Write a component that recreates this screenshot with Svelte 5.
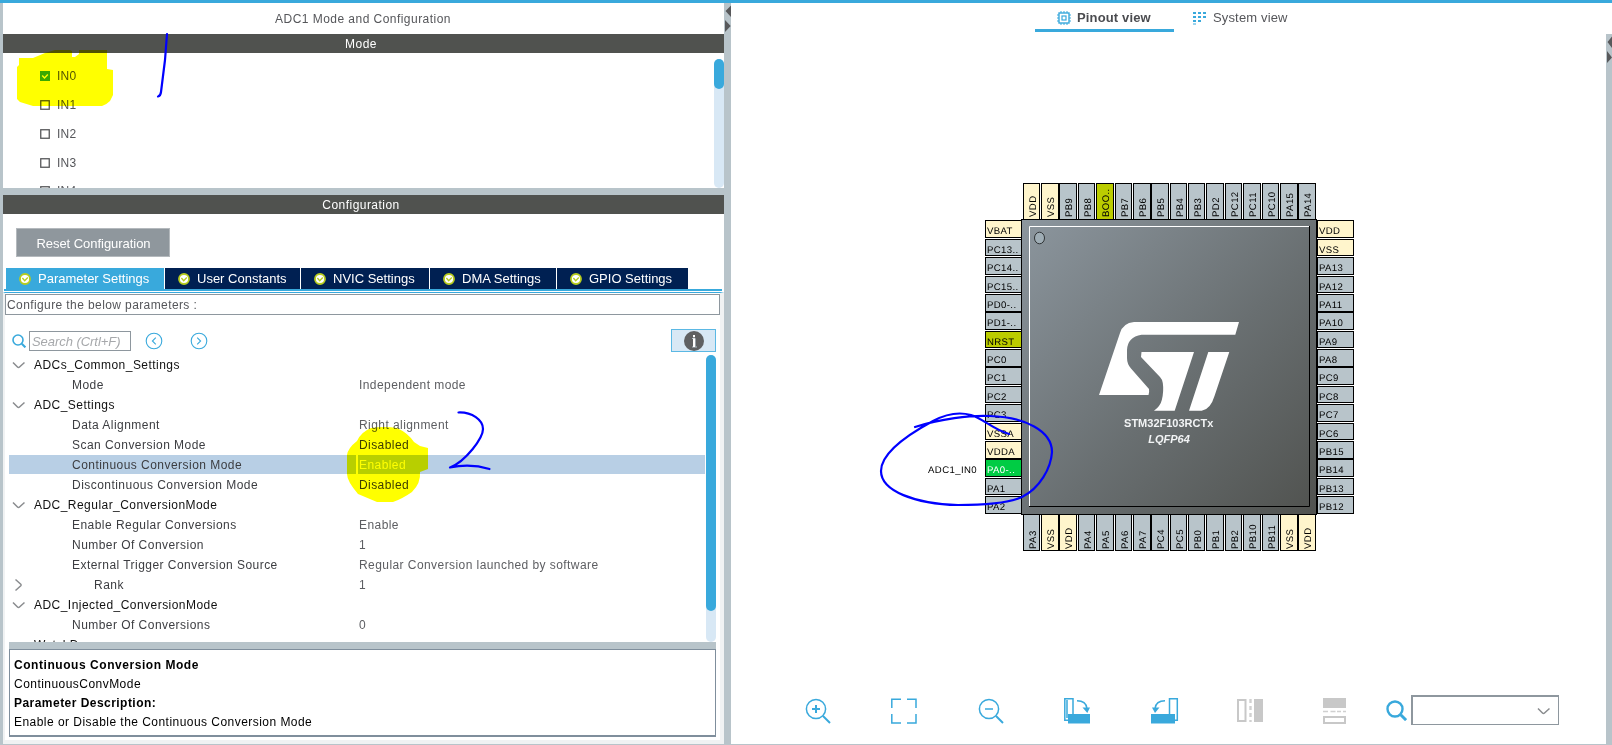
<script>
  const channels = ['IN0', 'IN1', 'IN2', 'IN3', 'IN4'];
  const tabs = [
    { label: 'Parameter Settings', width: 158, active: true },
    { label: 'User Constants', width: 135 },
    { label: 'NVIC Settings', width: 128 },
    { label: 'DMA Settings', width: 126 },
    { label: 'GPIO Settings', width: 131 }
  ];
  const rows = [
    { group: 'ADCs_Common_Settings' },
    { name: 'Mode', value: 'Independent mode' },
    { group: 'ADC_Settings' },
    { name: 'Data Alignment', value: 'Right alignment' },
    { name: 'Scan Conversion Mode', value: 'Disabled', dark: true },
    { name: 'Continuous Conversion Mode', value: 'Enabled', selected: true },
    { name: 'Discontinuous Conversion Mode', value: 'Disabled', dark: true },
    { group: 'ADC_Regular_ConversionMode' },
    { name: 'Enable Regular Conversions', value: 'Enable' },
    { name: 'Number Of Conversion', value: '1' },
    { name: 'External Trigger Conversion Source', value: 'Regular Conversion launched by software' },
    { name: 'Rank', value: '1', nested: true },
    { group: 'ADC_Injected_ConversionMode' },
    { name: 'Number Of Conversions', value: '0' },
    { group: 'WatchDog', bare: true }
  ];

  const topPins = ['VDD', 'VSS', 'PB9', 'PB8', 'BOO..', 'PB7', 'PB6', 'PB5', 'PB4', 'PB3', 'PD2', 'PC12', 'PC11', 'PC10', 'PA15', 'PA14'];
  const leftPins = ['VBAT', 'PC13..', 'PC14..', 'PC15..', 'PD0-..', 'PD1-..', 'NRST', 'PC0', 'PC1', 'PC2', 'PC3', 'VSSA', 'VDDA', 'PA0-..', 'PA1', 'PA2'];
  const rightPins = ['VDD', 'VSS', 'PA13', 'PA12', 'PA11', 'PA10', 'PA9', 'PA8', 'PC9', 'PC8', 'PC7', 'PC6', 'PB15', 'PB14', 'PB13', 'PB12'];
  const bottomPins = ['PA3', 'VSS', 'VDD', 'PA4', 'PA5', 'PA6', 'PA7', 'PC4', 'PC5', 'PB0', 'PB1', 'PB2', 'PB10', 'PB11', 'VSS', 'VDD'];
  const xs = [1023, 1041, 1059, 1078, 1096, 1115, 1133, 1151, 1170, 1188, 1206, 1225, 1243, 1262, 1280, 1298];
  const ws = [17, 18, 18, 17, 18, 17, 18, 18, 17, 17, 18, 17, 18, 17, 18, 18];
  const ys = [220, 239, 257, 276, 294, 312, 331, 349, 367, 386, 404, 423, 441, 459, 478, 496];
  const hs = [18, 17, 18, 17, 18, 18, 17, 18, 18, 17, 18, 17, 18, 18, 17, 18];

  function fill(pin) {
    if (/^V/.test(pin)) return '#fff5cc';
    if (pin === 'BOO..' || pin === 'NRST') return '#bbcc00';
    if (pin === 'PA0-..') return '#00cc44';
    return '#b8c4ca';
  }
</script>

{#snippet down()}
  <svg class="chev" width="14" height="8" viewBox="0 0 14 8"><path d="M1 1.5 L5.5 6 Q6.5 7 7.5 6 L12.5 1.5" /></svg>
{/snippet}

{#snippet lens(size)}
  <svg width={size} height={size} viewBox="0 0 14 14" fill="none" stroke="#39a9dc"><circle cx="6" cy="6" r="5" stroke-width="1.6" /><path d="M9.8 9.8 L13.4 13.4" stroke-width="2" /></svg>
{/snippet}

<div class="app">
  <div class="topline"></div>
  <div class="main">
    <section class="left">
      <div class="title">ADC1 Mode and Configuration</div>
      <div class="bar">Mode</div>
      <div class="modes">
        <div class="channels">
          {#each channels as c, i}
            <div class="channel">
              <svg width="10" height="10" viewBox="0 0 10 10">
                {#if i === 0}
                  <rect width="10" height="10" fill="#39a935" />
                  <path d="M2.2 4.5 L4.5 7 L7.8 3.5" fill="none" stroke="#fff" stroke-width="1.4" />
                {:else}
                  <rect x=".75" y=".75" width="8.5" height="8.5" fill="#fff" stroke="#57585a" stroke-width="1.3" />
                {/if}
              </svg>
              <span>{c}</span>
            </div>
          {/each}
        </div>
        <div class="track small"><div class="thumb"></div></div>
      </div>
      <div class="splitter"></div>
      <div class="bar">Configuration</div>
      <div class="config">
        <button class="reset">Reset Configuration</button>
        <div class="tabs">
          {#each tabs as t}
            <div class="tab" class:active={t.active} style="width:{t.width}px">
              <svg width="12" height="12" viewBox="0 0 12 12"><circle cx="6" cy="6" r="5" fill="#fff" stroke="#b7cc1e" stroke-width="1.8" /><path d="M3.4 5 L5.7 7.7 L8.8 4.5" fill="none" stroke="#b7cc1e" stroke-width="1.3" /></svg>
              <span>{t.label}</span>
            </div>
          {/each}
        </div>
        <div class="rule"></div>
        <div class="panel">
          <div class="hint">Configure the below parameters :</div>
          <div class="search">
            {@render lens(14)}
            <div class="field">Search (Crtl+F)</div>
            <svg class="nav" width="18" height="18" viewBox="0 0 18 18"><circle cx="9" cy="9" r="7.8" /><path d="M10.8 5.6 L7.4 9 L10.8 12.4" /></svg>
            <svg class="nav next" width="18" height="18" viewBox="0 0 18 18"><circle cx="9" cy="9" r="7.8" /><path d="M7.2 5.6 L10.6 9 L7.2 12.4" /></svg>
            <div class="info">
              <svg width="20" height="20" viewBox="0 0 20 20"><circle cx="10" cy="10" r="10" fill="#5f6062" /><path d="M8 7.500h3.200v8M8 16h5" fill="none" stroke="#d8e8f5" stroke-width=".7" /><path d="M10 4v2.200M10 7.500v8.500" stroke="#fff" stroke-width="2" /></svg>
            </div>
          </div>
          <div class="tree">
            <div class="rows">
              {#each rows as r}
                {#if r.group}
                  <div class="row group"><span class="toggle">{#if !r.bare}{@render down()}{/if}</span>{r.group}</div>
                {:else}
                  <div class="row" class:selected={r.selected}>
                    <span class="toggle">
                      {#if r.nested}<svg class="chev deep" width="9" height="14" viewBox="0 0 9 14"><path d="M1.5 1.5 L6.8 6.2 Q7.5 7 6.8 7.8 L1.5 12.5" /></svg>{/if}
                    </span>
                    <span class="name" class:nested={r.nested}>{r.name}</span>
                    <span class="value" class:dark={r.dark}>{r.value}</span>
                  </div>
                {/if}
              {/each}
            </div>
            <div class="track big"><div class="thumb"></div></div>
          </div>
          <div class="split2"></div>
          <div class="desc">
            <b class="wide">Continuous Conversion Mode</b>
            <span>ContinuousConvMode</span>
            <b>Parameter Description:</b>
            <span>Enable or Disable the Continuous Conversion Mode</span>
          </div>
        </div>
      </div>
    </section>

    <div class="divider">
      <svg width="7" height="30" viewBox="0 0 7 30" fill="#58595b"><path d="M7 2.5 V14 L1.5 8Z M1 17 V29 L6.7 23Z" /></svg>
    </div>

    <section class="right">
      <div class="views">
        <div class="view on">
          <svg width="14" height="14" viewBox="0 0 14 14" fill="none" stroke="#39a9dc"><rect x="2" y="2" width="10" height="10" stroke-width="1.4" /><rect x="5" y="5" width="4" height="4" stroke-width="1.2" /><path d="M4 0v2M7 0v2M10 0v2M4 12v2M7 12v2M10 12v2M0 4h2M0 7h2M0 10h2M12 4h2M12 7h2M12 10h2" /></svg>
          <span>Pinout view</span>
        </div>
        <div class="view">
          <svg width="14" height="14" viewBox="0 0 14 14" fill="none" stroke="#39a9dc" stroke-width="2"><path d="M0 2h3M5 2h3M10 2h3M0 6h3M5 6h3M10 6h3M0 10h3M5 10h3" /><path d="M0 13h3" stroke-width="1" /></svg>
          <span>System view</span>
        </div>
      </div>
      <div class="stage">
        <div class="work">
          <svg class="canvas" width="875" height="646" viewBox="731 34 875 646">
            <defs>
              <linearGradient id="body" x1="0" y1="0" x2="1" y2="1"><stop offset="0" stop-color="#8c969e" /><stop offset=".55" stop-color="#696f71" /><stop offset="1" stop-color="#50524f" /></linearGradient>
            </defs>
            {#each topPins as p, i}
              <rect x={xs[i] + 0.5} y="183.5" width={ws[i] - 1} height="36" fill={fill(p)} stroke="#000" />
              <text class="pin" transform="translate({xs[i] + 12.5} 217) rotate(-90)">{p}</text>
            {/each}
            {#each bottomPins as p, i}
              <rect x={xs[i] + 0.5} y="514.5" width={ws[i] - 1} height="36" fill={fill(p)} stroke="#000" />
              <text class="pin" transform="translate({xs[i] + 12.5} 549) rotate(-90)">{p}</text>
            {/each}
            {#each leftPins as p, i}
              <rect x="985.5" y={ys[i] + 0.5} width="36" height={hs[i] - 1} fill={fill(p)} stroke="#000" />
              <text class="pin" x="986.9" y={ys[i] + 14} fill={p === 'PA0-..' ? '#fff' : '#000'}>{p}</text>
            {/each}
            {#each rightPins as p, i}
              <rect x="1317.5" y={ys[i] + 0.5} width="36" height={hs[i] - 1} fill={fill(p)} stroke="#000" />
              <text class="pin" x="1318.9" y={ys[i] + 14}>{p}</text>
            {/each}
            <text class="pin" x="928" y="473">ADC1_IN0</text>
            <rect x="1021.5" y="219.5" width="295" height="295" fill="url(#body)" stroke="#000" />
            <path d="M1029.5 507 V226.5 H1310" fill="none" stroke="#fff" />
            <path d="M1029 506.5 H1309.5 V226" fill="none" stroke="#000" />
            <ellipse cx="1039.5" cy="238" rx="5" ry="5.8" fill="#9fadb5" stroke="#303436" />
            <g fill="#fff">
              <path d="M1239 322 H1134 Q1123 323 1120 333 L1099 395 H1148.5 Q1149.5 392 1149 389 L1131 368.5 Q1127 364 1127 358 V350 Q1127.5 337 1141.5 334.7 H1235.3Z" />
              <path d="M1141.5 352 H1194 L1174.7 410.7 H1154 Q1160.5 406 1161.8 400 Q1164 391 1162.8 383 Q1162 379 1160 377 L1141 357Z" />
              <path d="M1208.3 352 H1229.3 L1214.5 396 Q1210.5 409.5 1201.7 410.7 H1189Z" />
            </g>
            <text class="part" x="1168.7" y="427">STM32F103RCTx</text>
            <text class="part it" x="1169" y="443">LQFP64</text>
          </svg>
          <div class="tools">
            <svg width="27" height="27" viewBox="0 0 27 27" class="ln"><circle cx="11" cy="11" r="9.6" /><path d="M11 7v8M7 11h8" stroke-width="2" /><path d="M18 18 L25 25" stroke-width="2" /></svg>
            <svg width="27" height="27" viewBox="0 0 27 27" class="ln"><path d="M.8 10 V1.2 H10 M16 1.2 H25 V10 M25 16 V25 H16 M10 25 H.8 V16" /></svg>
            <svg width="27" height="27" viewBox="0 0 27 27" class="ln"><circle cx="11" cy="11" r="9.6" /><path d="M7 11h8" /><path d="M18 18 L25 25" stroke-width="2" /></svg>
            <svg width="27" height="27" viewBox="0 0 27 27" class="ln"><path d="M4 22.2H.8V.8H9V16M3 2v18" /><path d="M4 16h22v9.5H4Z" fill="#39a9dc" stroke="none" /><path d="M13 2.8 Q22 3 22.8 10" /><path d="M18.5 9.5 H26 L23.3 15Z" fill="#39a9dc" stroke="none" /></svg>
            <svg width="28" height="27" viewBox="0 0 28 27" class="ln"><path d="M23.5 22.2H26.3V.8H18.5V16" /><path d="M0 16h24v9.5H0Z" fill="#39a9dc" stroke="none" /><path d="M14 2.8 Q5 3 4.2 10" /><path d="M1 9.5 H8.5 L4 15Z" fill="#39a9dc" stroke="none" /></svg>
            <svg width="27" height="27" viewBox="0 0 27 27"><rect x="1" y="2" width="7.5" height="21" fill="#fff" stroke="#c8c8c8" stroke-width="2" /><path d="M13.5 1v4M13.5 8v4M13.5 15v4M13.5 22v2" stroke="#d0d0d0" stroke-width="2.4" /><path d="M17 1h9v23h-9Z" fill="#c8c8c8" /></svg>
            <svg width="27" height="27" viewBox="0 0 27 27"><path d="M0 0h23v10H0Z" fill="#c8c8c8" /><path d="M0 13.5h5M7.5 13.5h5M14 13.5h4M20 13.5h3" stroke="#d0d0d0" stroke-width="1.5" /><rect x="1" y="19" width="21" height="6" fill="#fff" stroke="#c8c8c8" stroke-width="2" /></svg>
            <div class="find">{@render lens(21)}<div class="combo">{@render down()}</div></div>
          </div>
        </div>
        <div class="edge"><svg width="6" height="30" viewBox="0 0 6 30" fill="#58595b"><path d="M6 2.5 V14 L1.5 8Z M1 17 V29 L6 23.5Z" /></svg></div>
      </div>
    </section>
  </div>

  <svg class="ink marker" width="1612" height="745" viewBox="0 0 1612 745" fill="#ff0">
    <path d="M17 67 L19 65 V58 H33 L45 53 L55 50 H70 L72 51 V57 H75 L79 54 V50 H107 V69 L113 70 V95 L110 101 Q106 105 102 106 H33 L20 102 L17 99Z" />
    <path d="M347 455 Q348 448 357 441 Q361 432 371 428 Q385 426 397 428 Q408 433 414 442 L420 446 L428 448 V469 L420 472 Q421 483 412 492 Q402 499 393 502 H377 L358 494 Q347 481 347 474Z" />
  </svg>
  <svg class="ink pen" width="1612" height="745" viewBox="0 0 1612 745">
    <path d="M167 34 L165 60 L161 92 Q160.5 96 158 96.5" />
    <path d="M458.5 412.5 C472 412 483 420 483 429 C483 438 466 461 450 467.5 Q470 463 489.5 469" />
    <path d="M915 427 C940 419 970 415 990 416 C1025 417 1052 431 1052 452 C1051 468 1040 488 1022 497 C1007 504 975 505 958 505 C915 504 881 491 881 471 C881 453 909 434 933 421 C946 414 960 412 971 415 C982 418 994 430 1009 434" />
  </svg>
</div>

<style>
  :global(body) { background: #fff; overflow: hidden; }
  .app { position: relative; width: 1612px; height: 745px; box-sizing: border-box; display: flex; flex-direction: column; font: 12px/20px "Liberation Sans", Arial, sans-serif; letter-spacing: .46px; color: #55565a; border-bottom: 1px solid #b8c4ca; background: #fff; white-space: nowrap; }
  .topline { height: 3px; background: #39a9dc; }
  .main { flex: 1; display: flex; min-height: 0; }
  .left { width: 721px; border-left: 3px solid #b8c4ca; display: flex; flex-direction: column; }
  .title { height: 31px; line-height: 33px; text-align: center; padding-right: 1px; }
  .bar { height: 19px; line-height: 20px; background: #50524f; color: #fff; text-align: center; padding-right: 5px; }
  .modes { height: 135px; display: flex; justify-content: space-between; overflow: hidden; }
  .channels { padding: 9px 0 0 37px; }
  .channel { height: 28.75px; display: flex; align-items: center; gap: 7px; letter-spacing: .2px; }
  .track { background: #d8e8f5; border-radius: 5px; width: 10px; }
  .thumb { background: #39a9dc; border-radius: 5px; width: 10px; }
  .small { margin-top: 6px; }
  .small .thumb { height: 30px; }
  .splitter { height: 7px; background: #b8c4ca; }
  .config { flex: 1; display: flex; flex-direction: column; align-items: flex-start; }
  .reset { margin: 14px 0 11px 13px; width: 154px; height: 29px; border: 1px solid #b4b9bd; background: #8f979d; color: #fff; font: 13px "Liberation Sans", Arial, sans-serif; padding: 1px 0 0 1px; letter-spacing: -.04px; }
  .tabs { display: flex; gap: 1px; height: 21px; margin-left: 3px; }
  .tab { background: #002052; color: #fff; display: flex; align-items: center; gap: 7px; padding-left: 13px; box-sizing: border-box; font-size: 13px; letter-spacing: 0; }
  .tab.active { background: #39a9dc; }
  .rule { height: 2px; background: #39a9dc; width: 718px; margin-left: 1px; }
  .panel { flex: 1; width: 721px; box-sizing: border-box; border: solid #f0f2f3; border-width: 0 4px 4px 2px; margin-top: 1px; display: flex; flex-direction: column; align-items: flex-start; border-top: 1px solid #39a9dc; }
  .hint { margin-top: 1px; width: 715px; height: 21px; box-sizing: border-box; border: 1px solid #8e979e; line-height: 20px; padding-left: 1px; letter-spacing: .4px; }
  .search { display: flex; align-items: center; width: 711px; height: 23px; margin: 14px 0 3px 7px; }
  .field { width: 102px; height: 20px; box-sizing: border-box; border: 1px solid #8e979e; margin: 0 14px 0 3px; font-size: 13px; line-height: 19px; letter-spacing: -.05px; font-style: italic; color: #a6a8ab; padding-left: 2px; }
  .nav { fill: none; stroke: #39a9dc; stroke-width: 1.1; }
  .next { margin-left: 27px; }
  .info { margin-left: auto; margin-right: 7px; width: 45px; height: 23px; box-sizing: border-box; border: 1px solid #5bb8e4; background: #d8e8f5; display: flex; align-items: center; justify-content: center; }
  .tree { display: flex; width: 707px; height: 287px; margin-left: 4px; gap: 1px; overflow: hidden; }
  .rows { width: 696px; }
  .row { height: 19px; margin-bottom: 1px; display: flex; line-height: 20px; color: #3c3d41; }
  .group { color: #111; }
  .toggle { width: 25px; display: flex; align-items: center; padding-left: 3px; box-sizing: border-box; }
  .chev { fill: none; stroke: #8a8c8f; stroke-width: 1.5; }
  .deep { margin-left: 2px; }
  .name { width: 322px; box-sizing: border-box; padding-left: 38px; }
  .nested { padding-left: 60px; }
  .value { flex: 1; padding-left: 3px; color: #5d5e62; letter-spacing: .43px; }
  .value.dark { color: #3c3d41; }
  .selected { background: #b8cfe5; }
  .selected .value { color: #fff; border-left: 2px solid #fff; padding-left: 1px; }
  .big .thumb { height: 256px; }
  .split2 { height: 7px; width: 707px; margin-left: 4px; background: #b8c4ca; }
  .desc { width: 707px; height: 88px; margin-left: 4px; box-sizing: border-box; border: 1px solid #7f8e9c; border-bottom-width: 2px; padding: 6px 4px; display: flex; flex-direction: column; line-height: 19px; color: #000; }
  .wide { letter-spacing: .55px; }
  .divider { width: 7px; background: #b8c4ca; }
  .divider svg, .edge svg { display: block; }
  .right { width: 881px; display: flex; flex-direction: column; }
  .views { height: 31px; display: flex; padding-left: 304px; font-size: 13px; letter-spacing: .15px; }
  .view { display: flex; align-items: center; gap: 6px; height: 29px; padding-left: 19px; box-sizing: border-box; line-height: 20px; }
  .on { width: 139px; padding-left: 22px; border-bottom: 3px solid #39a9dc; font-weight: bold; padding-top: 4px; color: #4b4c50; }
  .view:not(.on) { padding-top: 1px; }
  .stage { flex: 1; display: flex; }
  .work { width: 875px; display: flex; flex-direction: column; }
  .canvas { display: block; }
  .pin { font: 9.6px "Liberation Sans", Arial, sans-serif; letter-spacing: .4px; text-rendering: geometricPrecision; }
  .part { font: bold 11px "Liberation Sans", Arial, sans-serif; fill: #f2f4f5; text-anchor: middle; letter-spacing: 0; }
  .it { font-style: italic; }
  .tools { display: grid; grid-template-columns: repeat(6, 86.4px) 63px 1fr; padding-left: 74px; align-items: start; padding-top: 18px; }
  .ln { fill: none; stroke: #39a9dc; stroke-width: 1.5; }
  .find { display: flex; align-items: center; gap: 4px; margin-top: -3px; }
  .combo { width: 148px; height: 30px; box-sizing: border-box; border: solid #8e979e; border-width: 2px 1px 1px 2px; display: flex; align-items: center; justify-content: flex-end; padding-right: 7px; }
  .edge { width: 6px; background: #b8c4ca; }
  .ink { position: absolute; left: 0; top: 0; pointer-events: none; }
  .marker { mix-blend-mode: multiply; }
  .pen { fill: none; stroke: #00f; stroke-width: 2.2; stroke-linecap: round; stroke-linejoin: round; }
</style>
